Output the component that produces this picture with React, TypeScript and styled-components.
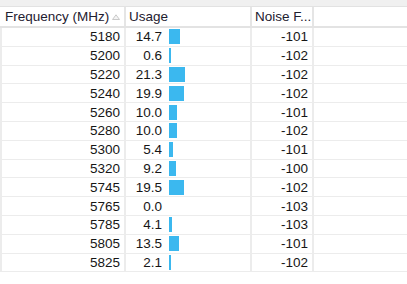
import React from 'react';
import styled, { createGlobalStyle } from 'styled-components';

const ROWS = [
  { freq: 5180, usage: 14.7, noise: -101 },
  { freq: 5200, usage: 0.6, noise: -102 },
  { freq: 5220, usage: 21.3, noise: -102 },
  { freq: 5240, usage: 19.9, noise: -102 },
  { freq: 5260, usage: 10.0, noise: -101 },
  { freq: 5280, usage: 10.0, noise: -102 },
  { freq: 5300, usage: 5.4, noise: -101 },
  { freq: 5320, usage: 9.2, noise: -100 },
  { freq: 5745, usage: 19.5, noise: -102 },
  { freq: 5765, usage: 0.0, noise: -103 },
  { freq: 5785, usage: 4.1, noise: -103 },
  { freq: 5805, usage: 13.5, noise: -101 },
  { freq: 5825, usage: 2.1, noise: -102 },
];

const GlobalStyle = createGlobalStyle`
  body {
    margin: 0;
    background: #fff;
    font-family: "Liberation Sans", Arial, sans-serif;
  }
`;

const App: React.FC = () => {
  return (
    <>
      <GlobalStyle />
      <StyledList>
        <StyledTopStrip />
        <StyledHeader>
          <StyledHeaderCell>
            Frequency (MHz)
            <StyledSortArrow width="8" height="6" viewBox="0 0 8 6">
              <path d="M0.5 5.5 L4 0.8 L7.5 5.5 Z" fill="#f4f4f4" stroke="#c9c9c9" strokeWidth="1" />
            </StyledSortArrow>
          </StyledHeaderCell>
          <StyledHeaderCell>Usage</StyledHeaderCell>
          <StyledHeaderCell>Noise F...</StyledHeaderCell>
          <StyledHeaderFiller />
        </StyledHeader>
        {ROWS.map((r) => (
          <StyledRow key={r.freq}>
            <StyledCell>{r.freq}</StyledCell>
            <StyledUsageCell>
              <StyledUsageValue>{r.usage.toFixed(1)}</StyledUsageValue>
              {r.usage > 0 && <StyledBar style={{ width: Math.max(2, Math.round(r.usage * 0.75)) }} />}
            </StyledUsageCell>
            <StyledCell>{r.noise}</StyledCell>
            <StyledFiller />
          </StyledRow>
        ))}
      </StyledList>
    </>
  );
};

const StyledList = styled.div`
  width: 407px;
  height: 284px;
  overflow: hidden;
  background: #fff;
`;

const StyledTopStrip = styled.div`
  height: 6px;
  background: #f0f0f0;
  border-bottom: 1px solid #e2e2e2;
`;

const StyledHeader = styled.div`
  display: grid;
  grid-template-columns: 124px 126px 62px 1fr;
  height: 19px;
  padding-left: 2px;
  border-bottom: 2px solid #e3e3e3;
  background: #fff;
`;

const StyledHeaderCell = styled.div`
  display: flex;
  align-items: center;
  padding-left: 3px;
  font-size: 13.5px;
  color: #1e2030;
  white-space: nowrap;
  overflow: hidden;
  border-right: 2px solid #e5e5e5;
`;

const StyledHeaderFiller = styled.div``;

const StyledSortArrow = styled.svg`
  margin-left: auto;
  margin-right: 4px;
  margin-top: 1px;
  flex-shrink: 0;
`;

const StyledRow = styled.div`
  display: grid;
  grid-template-columns: 124px 126px 62px 1fr;
  height: 18.8px;
  box-sizing: border-box;
  border-bottom: 1px solid #ececec;
  border-left: 2px solid #ececec;
  font-size: 13.5px;
  color: #161616;
`;

const StyledCell = styled.div`
  display: flex;
  align-items: center;
  justify-content: flex-end;
  padding-right: 4px;
  border-right: 2px solid #ececec;
`;

const StyledUsageCell = styled.div`
  display: flex;
  align-items: center;
  border-right: 2px solid #ececec;
`;

const StyledUsageValue = styled.div`
  width: 36px;
  text-align: right;
  margin-right: 7px;
`;

const StyledBar = styled.div`
  height: 15px;
  background: #3bb8ef;
`;

const StyledFiller = styled.div``;

export default App;
